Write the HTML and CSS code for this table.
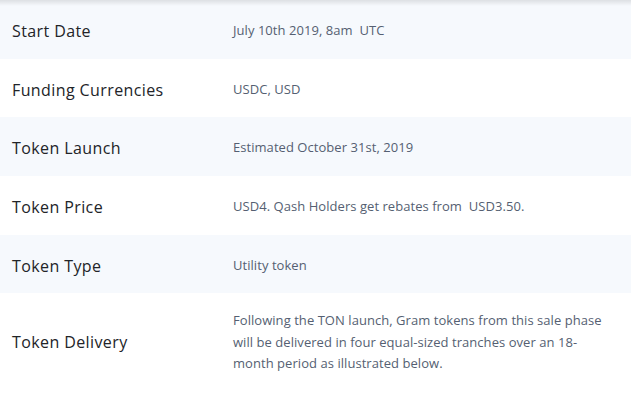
FILE: index.html
```html
<!DOCTYPE html>
<html>
<head>
<meta charset="utf-8">
<link rel="stylesheet" href="styles.css">
</head>
<body>
<div class="shade"></div>
<div class="table">
  <div class="row alt"><div class="label">Start Date</div><div class="value">July 10th 2019, 8am&nbsp; UTC</div></div>
  <div class="row"><div class="label">Funding Currencies</div><div class="value">USDC, USD</div></div>
  <div class="row alt"><div class="label">Token Launch</div><div class="value">Estimated October 31st, 2019</div></div>
  <div class="row"><div class="label">Token Price</div><div class="value">USD4. Qash Holders get rebates from&nbsp; USD3.50.</div></div>
  <div class="row alt"><div class="label">Token Type</div><div class="value">Utility token</div></div>
  <div class="row tall"><div class="label">Token Delivery</div><div class="value">Following the TON launch, Gram tokens from this sale phase will be delivered in four equal-sized tranches over an 18-month period as illustrated below.</div></div>
</div>
</body>
</html>
```
FILE: styles.css
```css
html, body {
  margin: 0;
  padding: 0;
  background: #ffffff;
  width: 631px;
  height: 405px;
  overflow: hidden;
}
body {
  position: relative;
  font-family: "Open Sans", "Noto Sans", sans-serif;
}
.shade {
  position: absolute;
  left: 0;
  top: 0;
  width: 100%;
  height: 6px;
  background: linear-gradient(to bottom, rgba(0,0,0,0.10), rgba(0,0,0,0));
  pointer-events: none;
}
.table {
  display: flex;
  flex-direction: column;
}
.row {
  display: grid;
  grid-template-columns: 221px 376px;
  align-items: center;
  height: 58.7px;
  box-sizing: border-box;
  padding-left: 12px;
  padding-top: 3px;
}
.row.alt {
  background: #f6f9fd;
}
.row.tall {
  height: 96px;
  padding-top: 2px;
}
.label {
  font-size: 16px;
  color: #222428;
  letter-spacing: 0.4px;
}
.value {
  font-size: 13px;
  color: #555f72;
  line-height: 21.5px;
  letter-spacing: 0.05px;
}
```
